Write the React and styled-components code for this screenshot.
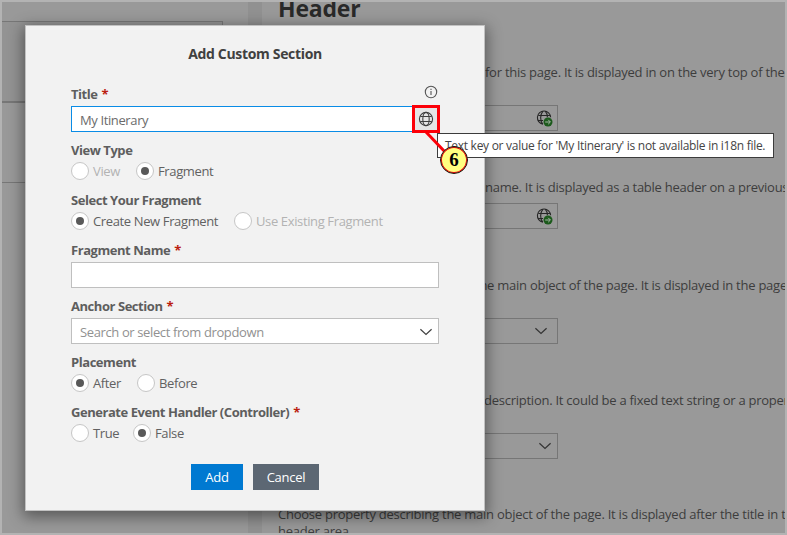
import React from 'react';
import styled, { createGlobalStyle, css } from 'styled-components';

const GlobalStyle = createGlobalStyle`
  *, *::before, *::after { box-sizing: border-box; }
  body {
    margin: 0;
    font-family: 'Open Sans', 'Noto Sans', sans-serif;
    font-size: 13px;
    overflow: hidden;
  }
`;

const Frame = styled.div`
  position: relative;
  width: 787px;
  height: 535px;
  border: 2px solid #b3b3b3;
  background: #999;
  overflow: hidden;
`;

const Backdrop = styled.div`
  display: grid;
  grid-template-columns: 246px 14px 1fr;
  height: 100%;
`;

const Outline = styled.div`
  padding-top: 19px;
`;

const OutlineCard = styled.div`
  width: 221px;
  height: 80px;
  background: #939393;
  border-top: 1px solid #777;
  border-right: 1px solid #777;
`;

const OutlineRow = styled.div`
  height: 82px;
  border-top: 2px solid #777;
  border-bottom: 1px solid #777;
`;

const Gutter = styled.div`
  background: #919191;
`;

const Properties = styled.div`
  height: 531px;
  padding-left: 16px;
  overflow: hidden;
  color: #3d3d3d;
`;

const Heading = styled.h1`
  margin: -10px 0 0;
  height: 71px;
  font-size: 23px;
  line-height: 33px;
  font-weight: 700;
  letter-spacing: -0.2px;
  color: #292929;
`;

const Property = styled.section`
  height: ${p => p.$height}px;
`;

const Description = styled.p`
  margin: 0 0 ${p => p.$gap || 0}px;
  padding-left: ${p => p.$indent || 0}px;
  line-height: 18px;
  letter-spacing: -0.25px;
  white-space: nowrap;
`;

const WrappedDescription = styled(Description)`
  line-height: 17px;
`;

const ShadedField = styled.div`
  display: flex;
  align-items: center;
  justify-content: flex-end;
  width: 280px;
  height: 26px;
  padding-right: ${p => p.$inset}px;
  border: 1px solid #767676;
`;

const Dialog = styled.div`
  position: absolute;
  left: 23px;
  top: 23px;
  width: 460px;
  height: 486px;
  padding: 18px 45px 0;
  background: #f2f2f2;
  border: 1px solid #c2c2c2;
  box-shadow: 0 4px 14px 2px rgba(0, 0, 0, 0.42);
  color: #666;
`;

const DialogTitle = styled.h2`
  margin: 0 0 20px;
  text-align: center;
  font-size: 14px;
  line-height: 20px;
  font-weight: 700;
  letter-spacing: -0.33px;
  color: #404040;
`;

const Form = styled.div`
  display: flex;
  flex-direction: column;
  gap: 8px;
`;

const Label = styled.div`
  display: flex;
  align-items: center;
  height: 20px;
  margin-bottom: 2px;
  font-weight: 700;
  letter-spacing: -0.45px;
  color: #5e5e5e;
  white-space: nowrap;
`;

const Required = styled.span`
  margin-left: 4px;
  color: #bb1e10;
`;

const InfoSlot = styled.span`
  display: flex;
  margin: -5px 1px 0 auto;
`;

const Input = styled.div`
  display: flex;
  align-items: center;
  justify-content: space-between;
  height: 26px;
  padding: 2px 6px 0 8px;
  background: #fff;
  border: 1px solid ${p => (p.$focused ? '#0a8ce6' : '#bfbfbf')};
  color: ${p => (p.$placeholder ? '#919191' : '#6b6b6b')};
  letter-spacing: -0.38px;
  ${p => p.$focused && css`padding-right: 0; padding-top: 0;`}
`;

const InputText = styled.span`
  padding-top: 2px;
`;

const HelpButton = styled.div`
  display: flex;
  align-items: center;
  justify-content: center;
  flex: none;
  width: 28px;
  height: 28px;
  margin-right: -2px;
  background: #e5e5e5;
  border: 3px solid #fc0008;
`;

const RadioRow = styled.div`
  display: flex;
  height: 18px;
  margin-bottom: 2px;
`;

const RadioOption = styled.div`
  display: flex;
  align-items: center;
  flex: none;
  gap: 4px;
  width: ${p => (p.$width ? `${p.$width}px` : 'auto')};
  color: ${p => (p.$disabled ? '#b3b3b3' : '#616161')};
  letter-spacing: -0.37px;
  white-space: nowrap;
`;

const RadioCircle = styled.span`
  display: flex;
  align-items: center;
  justify-content: center;
  flex: none;
  width: 18px;
  height: 18px;
  border: 1px solid #c6c6c6;
  border-radius: 50%;
  background: #fff;
  &::after {
    content: '';
    width: 8px;
    height: 8px;
    border-radius: 50%;
    background: ${p => (p.$checked ? '#595959' : 'transparent')};
  }
`;

const Actions = styled.div`
  display: flex;
  gap: 10px;
  margin: 20px 0 0 120px;
`;

const Button = styled.div`
  display: flex;
  align-items: center;
  justify-content: center;
  width: ${p => p.$width}px;
  height: 26px;
  background: ${p => (p.$primary ? '#0079d1' : '#5c6773')};
  color: #fff;
  letter-spacing: -0.25px;
`;

const Tooltip = styled.div`
  position: absolute;
  left: 435px;
  top: 131px;
  width: 337px;
  height: 25px;
  padding-left: 7px;
  border: 1px solid #3c3c3c;
  background: #fff;
  color: #444;
  font-size: 12px;
  line-height: 24px;
  letter-spacing: -0.28px;
  white-space: nowrap;
`;

const Pointer = styled.svg`
  position: absolute;
  left: 418px;
  top: 128px;
`;

const StepBadge = styled.div`
  position: absolute;
  left: 438px;
  top: 144px;
  display: flex;
  align-items: center;
  justify-content: center;
  width: 28px;
  height: 28px;
  border: 1px solid #181010;
  border-radius: 50%;
  background: #ffff80;
  box-shadow: inset 0 0 0 1px #f00008;
  font: 700 19px 'Liberation Serif', serif;
  color: #000;
`;

const Globe = () => (
  <svg width="16" height="16" viewBox="0 0 16 16" fill="none" stroke="#3f3f3f" strokeWidth="1.1">
    <circle cx="8" cy="8" r="6.6" />
    <ellipse cx="8" cy="8" rx="3.2" ry="6.6" />
    <path d="M2.300 5.500h11.400M2.300 10.500h11.400" />
  </svg>
);

const GlobeLinked = () => (
  <svg width="17" height="17" viewBox="0 0 17 17" fill="none">
    <g stroke="#262626" strokeWidth="1.1">
      <path d="M14.600 7.200A6.600 6.600 0 1 0 6.800 14.100" />
      <path d="M6.800 14.100C3.800 11 4 4.500 7 1.200M9.200 1.200c1.400 1.500 2.200 3.800 2.200 6M2.300 5.500h11.600M2 10.500h5" />
    </g>
    <circle cx="12" cy="12" r="4.500" fill="#1c5a1c" />
    <path d="M9.200 12h5M12.200 9.800l2.200 2.200-2.200 2.200" stroke="#a6b5a6" />
  </svg>
);

const Chevron = ({ color = '#404040' }) => (
  <svg width="12" height="8" viewBox="0 0 12 8" fill="none" stroke={color} strokeWidth="1.2">
    <path d="M.4 1.300 6 6.500l5.600-5.200" />
  </svg>
);

const Info = () => (
  <svg width="14" height="14" viewBox="0 0 14 14" fill="none" stroke="#555">
    <circle cx="7" cy="7" r="5.700" strokeWidth="1.1" />
    <path d="M7 6v4M7 3.700v1.200" strokeWidth="1.1" />
  </svg>
);

const Radio = ({ label, checked, disabled, width }) => (
  <RadioOption $width={width} $disabled={disabled}>
    <RadioCircle $checked={checked} />
    {label}
  </RadioOption>
);

const FieldLabel = ({ text, required, children }) => (
  <Label>
    {text}
    {required && <Required>*</Required>}
    {children}
  </Label>
);

export default function App() {
  return (
    <>
      <GlobalStyle />
      <Frame>
        <Backdrop>
          <Outline>
            <OutlineCard />
            <OutlineRow />
          </Outline>
          <Gutter />
          <Properties>
            <Heading>Header</Heading>
            <Property $height={115}>
              <Description $indent={207} $gap={24}>for this page. It is displayed in on the very top of the</Description>
              <ShadedField $inset={4}><GlobeLinked /></ShadedField>
            </Property>
            <Property $height={98}>
              <Description $indent={207} $gap={7}>name. It is displayed as a table header on a previous</Description>
              <ShadedField $inset={4}><GlobeLinked /></ShadedField>
            </Property>
            <Property $height={115}>
              <Description $indent={197} $gap={24}>the main object of the page. It is displayed in the page</Description>
              <ShadedField $inset={10}><Chevron color="#333" /></ShadedField>
            </Property>
            <Property $height={115}>
              <Description $indent={206} $gap={24}>description. It could be a fixed text string or a proper</Description>
              <ShadedField $inset={6}><Chevron color="#333" /></ShadedField>
            </Property>
            <WrappedDescription>
              Choose property describing the main object of the page. It is displayed after the title in t<br />
              header area
            </WrappedDescription>
          </Properties>
        </Backdrop>

        <Dialog>
          <DialogTitle>Add Custom Section</DialogTitle>
          <Form>
            <div>
              <FieldLabel text="Title" required><InfoSlot><Info /></InfoSlot></FieldLabel>
              <Input $focused>
                <InputText>My Itinerary</InputText>
                <HelpButton><Globe /></HelpButton>
              </Input>
            </div>
            <div>
              <FieldLabel text="View Type" />
              <RadioRow>
                <Radio label="View" disabled width={65} />
                <Radio label="Fragment" checked />
              </RadioRow>
            </div>
            <div>
              <FieldLabel text="Select Your Fragment" />
              <RadioRow>
                <Radio label="Create New Fragment" checked width={163} />
                <Radio label="Use Existing Fragment" disabled />
              </RadioRow>
            </div>
            <div>
              <FieldLabel text="Fragment Name" required />
              <Input />
            </div>
            <div>
              <FieldLabel text="Anchor Section" required />
              <Input $placeholder>
                <span>Search or select from dropdown</span>
                <Chevron />
              </Input>
            </div>
            <div>
              <FieldLabel text="Placement" />
              <RadioRow>
                <Radio label="After" checked width={66} />
                <Radio label="Before" />
              </RadioRow>
            </div>
            <div>
              <FieldLabel text="Generate Event Handler (Controller)" required />
              <RadioRow>
                <Radio label="True" width={62} />
                <Radio label="False" checked />
              </RadioRow>
            </div>
          </Form>
          <Actions>
            <Button $primary $width={52}>Add</Button>
            <Button $width={66}>Cancel</Button>
          </Actions>
        </Dialog>

        <Tooltip>Text key or value for 'My Itinerary' is not available in i18n file.</Tooltip>
        <Pointer width="28" height="28" viewBox="0 0 28 28">
          <path d="M6 2 26 23" stroke="#fc0008" strokeWidth="3" />
        </Pointer>
        <StepBadge>6</StepBadge>
      </Frame>
    </>
  );
}
